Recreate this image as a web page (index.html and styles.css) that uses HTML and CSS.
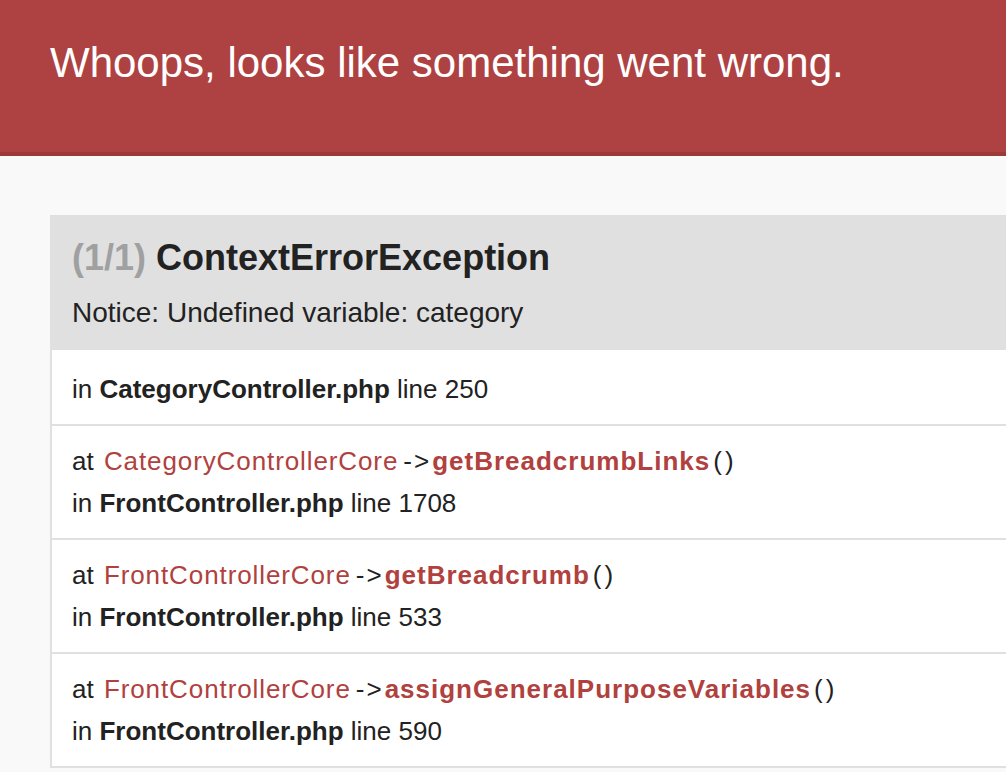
FILE: index.html
```html
<!DOCTYPE html>
<html>
<head>
<meta charset="utf-8">
<link rel="stylesheet" href="styles.css">
</head>
<body>
<header class="page-header">
  <h1 class="whoops">Whoops, looks like something went wrong.</h1>
</header>
<main class="content">
  <section class="exception">
    <div class="exc-head">
      <h2 class="exc-title"><span class="counter">(1/1)</span> ContextErrorException</h2>
      <p class="exc-message">Notice: Undefined variable: category</p>
    </div>
    <ol class="traces">
      <li class="trace">
        <div class="line">in <b>CategoryController.php</b> line 250</div>
      </li>
      <li class="trace">
        <div class="line">at <span class="cls">CategoryControllerCore</span><span class="arrow">-&gt;</span><span class="method">getBreadcrumbLinks</span><span class="args">()</span></div>
        <div class="line">in <b>FrontController.php</b> line 1708</div>
      </li>
      <li class="trace">
        <div class="line">at <span class="cls">FrontControllerCore</span><span class="arrow">-&gt;</span><span class="method">getBreadcrumb</span><span class="args">()</span></div>
        <div class="line">in <b>FrontController.php</b> line 533</div>
      </li>
      <li class="trace">
        <div class="line">at <span class="cls">FrontControllerCore</span><span class="arrow">-&gt;</span><span class="method">assignGeneralPurposeVariables</span><span class="args">()</span></div>
        <div class="line">in <b>FrontController.php</b> line 590</div>
      </li>
    </ol>
  </section>
</main>
</body>
</html>
```

FILE: styles.css
```css
html, body {
  margin: 0;
  padding: 0;
}
body {
  background: #f9f9f9;
  font-family: "Liberation Sans", Arial, Helvetica, sans-serif;
  color: #222222;
  overflow: hidden;
  width: 1006px;
  height: 772px;
}
.page-header {
  background: #ae4242;
  border-bottom: 4px solid #9d3939;
  height: 152px;
  padding: 0 50px;
  box-sizing: content-box;
}
.whoops {
  margin: 0;
  padding-top: 38px;
  font-size: 42px;
  line-height: 50px;
  font-weight: normal;
  color: #ffffff;
  white-space: nowrap;
}
.content {
  padding: 59px 0 0 50px;
}
.exception {
  width: 1100px;
  border: 2px solid #e0e0e0;
  border-right: none;
  border-bottom: none;
  background: #ffffff;
}
.exc-head {
  background: #e0e0e0;
  padding: 19px 20px 19px;
}
.exc-title {
  margin: 0;
  font-size: 36px;
  line-height: 44px;
  font-weight: bold;
  color: #222222;
  white-space: nowrap;
}
.counter {
  color: #a0a0a0;
}
.exc-message {
  margin: 15px 0 0;
  font-size: 28px;
  line-height: 36px;
  color: #222222;
  white-space: nowrap;
}
.traces {
  list-style: none;
  margin: 0;
  padding: 0;
}
.trace {
  padding: 14px 20px;
  border-bottom: 2px solid #e0e0e0;
}
.trace:first-child {
  padding-top: 18px;
}
.line {
  font-size: 26px;
  line-height: 42px;
  white-space: nowrap;
}
.line b {
  font-weight: bold;
}
.cls {
  color: #b0413e;
  margin-left: 3px;
  letter-spacing: 0.9px;
}
.arrow {
  margin-left: 5px;
  margin-right: 1px;
  letter-spacing: 2px;
  color: #222222;
}
.method {
  color: #b0413e;
  font-weight: bold;
  letter-spacing: 1px;
}
.args {
  letter-spacing: 3px;
  margin-left: 3px;
}
```
